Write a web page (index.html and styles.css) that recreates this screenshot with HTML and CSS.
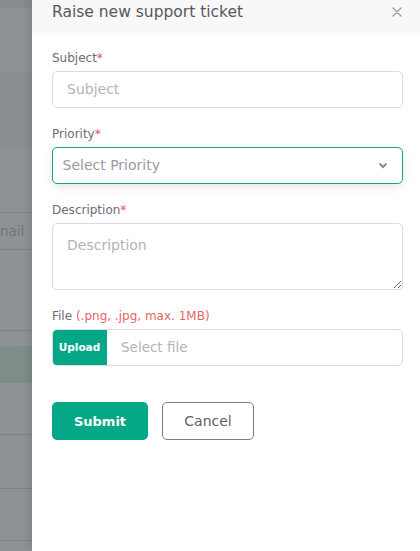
FILE: index.html
```html
<!DOCTYPE html>
<html lang="en">
<head>
<meta charset="utf-8">
<title>Raise new support ticket</title>
<link rel="stylesheet" href="styles.css">
</head>
<body>
<div class="screen">
  <div class="backdrop">
    <div class="band b1"></div>
    <div class="band b2"></div>
    <div class="band b3"></div>
    <div class="band b4 line"></div>
    <div class="band b5 line"><span class="cut">nail</span></div>
    <div class="band b6 line"></div>
    <div class="band b7"></div>
    <div class="band b8"></div>
    <div class="band b9 line"></div>
    <div class="band b10 line"></div>
    <div class="band b11 line"></div>
    <div class="band b12"></div>
  </div>
  <div class="panel">
    <div class="header">
      <h1 class="title">Raise new support ticket</h1>
      <button class="close" type="button" aria-label="Close">
        <svg width="10" height="10" viewBox="0 0 10 10"><path d="M1 1 L9 9 M9 1 L1 9" stroke="#a2a2ac" stroke-width="1.5" fill="none" stroke-linecap="round"/></svg>
      </button>
    </div>
    <form class="form">
      <div class="group">
        <label class="label">Subject<span class="req">*</span></label>
        <input class="control" type="text" placeholder="Subject">
      </div>
      <div class="group">
        <label class="label">Priority<span class="req">*</span></label>
        <div class="control select">
          <span class="select-text">Select Priority</span>
          <svg class="chev" width="10" height="7" viewBox="0 0 10 7"><path d="M1.5 1.5 L5 5 L8.5 1.5" stroke="#8a8a90" stroke-width="2" fill="none"/></svg>
        </div>
      </div>
      <div class="group">
        <label class="label">Description<span class="req">*</span></label>
        <textarea class="control area" placeholder="Description"></textarea>
      </div>
      <div class="group">
        <label class="label">File <span class="hint">(.png, .jpg, max. 1MB)</span></label>
        <div class="control file">
          <span class="upload">Upload</span>
          <span class="file-text">Select file</span>
        </div>
      </div>
      <div class="actions">
        <button class="btn primary" type="button">Submit</button>
        <button class="btn secondary" type="button">Cancel</button>
      </div>
    </form>
  </div>
</div>
</body>
</html>
```
FILE: styles.css
```css
html, body {
  margin: 0;
  padding: 0;
}
body {
  width: 420px;
  height: 551px;
  overflow: hidden;
  font-family: "DejaVu Sans", "Liberation Sans", sans-serif;
  background: #8f9295;
}
.screen {
  display: flex;
  height: 551px;
}
.backdrop {
  width: 32px;
  flex: none;
  display: flex;
  flex-direction: column;
  background: #8f9295;
  overflow: hidden;
}
.band {
  flex: none;
  box-sizing: border-box;
  background: #8f9295;
}
.band.line {
  border-bottom: 1px solid #7f8285;
}
.b1 { height: 8px; background: #888b8e; }
.b2 { height: 63px; }
.b3 { height: 76px; background: #8b8e91; }
.b4 { height: 66px; }
.b5 {
  height: 37px;
  display: flex;
  align-items: center;
  padding-left: 0;
  white-space: nowrap;
}
.cut {
  font-size: 13.5px;
  color: #727579;
  line-height: 18px;
}
.b6 { height: 81px; }
.b7 { height: 15px; }
.b8 { height: 37px; background: #7e8d8a; }
.b9 { height: 52px; }
.b10 { height: 54px; }
.b11 { height: 52px; }
.b12 { flex: 1; }

.panel {
  flex: 1;
  background: #ffffff;
  box-shadow: -3px 0 8px rgba(0, 0, 0, 0.10);
  display: flex;
  flex-direction: column;
}
.header {
  height: 33px;
  box-sizing: border-box;
  background: #f8f8f8;
  display: flex;
  justify-content: space-between;
  align-items: flex-start;
  padding: 3px 18px 0 20px;
}
.title {
  margin: 0;
  font-size: 15.5px;
  line-height: 18px;
  font-weight: normal;
  color: #575761;
}
.close {
  margin-top: 3.5px;
  padding: 0;
  border: 0;
  background: none;
  width: 10px;
  height: 10px;
  display: flex;
}
.form {
  padding: 17px 17px 0 20px;
  display: flex;
  flex-direction: column;
}
.group {
  display: flex;
  flex-direction: column;
  margin-bottom: 18px;
}
.label {
  font-size: 12px;
  line-height: 16px;
  color: #6c6c78;
  margin-bottom: 4.5px;
}
.req {
  color: #e8505b;
}
.hint {
  color: #e86464;
}
.control {
  box-sizing: border-box;
  height: 37.5px;
  width: 100%;
  border: 1px solid #dcdce2;
  border-radius: 5px;
  background: #fff;
  font-family: inherit;
  font-size: 14px;
  color: #555;
  padding: 0 14px;
  margin: 0;
  outline: none;
}
.control::placeholder {
  color: #b3b3bb;
}
.select {
  display: flex;
  align-items: center;
  justify-content: space-between;
  border: 1.5px solid #12a587;
  padding: 0 14px 0 9.5px;
  box-shadow: 0 3px 10px rgba(0, 0, 0, 0.10);
}
.select-text {
  color: #9a9aa2;
  font-size: 14px;
}
.chev {
  display: block;
  margin-top: 1px;
}
.area {
  height: 67.5px;
  padding: 12px 14px;
  resize: vertical;
  line-height: 18px;
  display: block;
}
.file {
  display: flex;
  align-items: stretch;
  padding: 0;
  overflow: hidden;
}
.upload {
  width: 55px;
  flex: none;
  background: #05a886;
  color: #fff;
  font-weight: bold;
  font-size: 10.5px;
  display: flex;
  align-items: center;
  justify-content: center;
  margin: -1px 0 -1px -1px;
  border-radius: 5px 0 0 5px;
}
.file-text {
  display: flex;
  align-items: center;
  padding-left: 14px;
  color: #b3b3bb;
  font-size: 13.5px;
}
.actions {
  display: flex;
  gap: 14px;
  margin-top: 18px;
}
.btn {
  box-sizing: border-box;
  height: 38px;
  border-radius: 5px;
  font-family: inherit;
  font-size: 14px;
  padding: 0;
  margin: 0;
  cursor: pointer;
}
.primary {
  width: 96px;
  background: #05a886;
  border: 0;
  color: #fff;
  font-weight: bold;
  font-size: 13px;
}
.secondary {
  width: 92px;
  background: #fff;
  border: 1px solid #7c7c82;
  color: #616169;
}
```
